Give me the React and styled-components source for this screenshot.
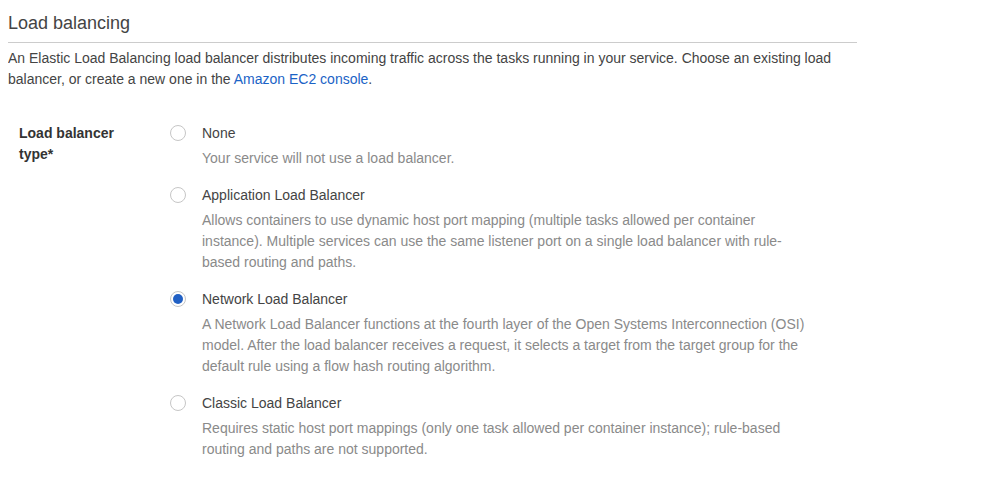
import React from 'react';
import styled, { createGlobalStyle } from 'styled-components';

const GlobalStyle = createGlobalStyle`
  body {
    margin: 8px;
    background: #fff;
    font-family: 'Liberation Sans', Arial, sans-serif;
    color: #444;
  }
`;

const Section = styled.section`
  width: 849px;
`;

const Heading = styled.h2`
  margin: 0;
  padding: 4px 0 8px;
  font-size: 18px;
  font-weight: normal;
  line-height: 22px;
  color: #444;
  border-bottom: 1px solid #ccc;
`;

const Intro = styled.p`
  margin: 5px 0 0;
  font-size: 14px;
  line-height: 21px;
`;

const Link = styled.a`
  color: #1b63c6;
  text-decoration: none;
`;

const FormRow = styled.div`
  display: flex;
  margin-top: 33px;
  padding-left: 11px;
`;

const FieldLabel = styled.div`
  box-sizing: border-box;
  width: 151px;
  padding-right: 30px;
  flex-shrink: 0;
  font-size: 14px;
  line-height: 21px;
  font-weight: bold;
  color: #333;
`;

const Options = styled.div`
  display: flex;
  flex-direction: column;
  gap: 16px;
  width: 640px;
`;

const Option = styled.label`
  display: grid;
  grid-template-columns: 16px 1fr;
  column-gap: 16px;
  row-gap: 4px;
  font-size: 14px;
  line-height: 21px;
  cursor: pointer;
`;

const Radio = styled.span`
  box-sizing: border-box;
  width: 16px;
  height: 16px;
  margin-top: 2px;
  border-radius: 50%;
  border: 1px solid #c6c6c6;
  display: flex;
  align-items: center;
  justify-content: center;

  &::after {
    content: '';
    width: 10px;
    height: 10px;
    border-radius: 50%;
    background: ${(p) => (p.$checked ? '#2160c4' : 'transparent')};
  }
`;

const Title = styled.span`
  color: #444;
`;

const Desc = styled.span`
  grid-column: 2;
  color: #8a8a8a;
`;

const options = [
  {
    title: 'None',
    desc: 'Your service will not use a load balancer.',
  },
  {
    title: 'Application Load Balancer',
    desc:
      'Allows containers to use dynamic host port mapping (multiple tasks allowed per container instance). Multiple services can use the same listener port on a single load balancer with rule-based routing and paths.',
  },
  {
    title: 'Network Load Balancer',
    desc:
      'A Network Load Balancer functions at the fourth layer of the Open Systems Interconnection (OSI) model. After the load balancer receives a request, it selects a target from the target group for the default rule using a flow hash routing algorithm.',
    checked: true,
  },
  {
    title: 'Classic Load Balancer',
    desc:
      'Requires static host port mappings (only one task allowed per container instance); rule-based routing and paths are not supported.',
  },
];

const App = () => {
  return (
    <Section>
      <GlobalStyle />
      <Heading>Load balancing</Heading>
      <Intro>
        An Elastic Load Balancing load balancer distributes incoming traffic across the tasks
        running in your service. Choose an existing load balancer, or create a new one in the{' '}
        <Link href="#">Amazon EC2 console</Link>.
      </Intro>
      <FormRow>
        <FieldLabel>Load balancer type*</FieldLabel>
        <Options>
          {options.map((o) => (
            <Option key={o.title}>
              <Radio $checked={o.checked} />
              <Title>{o.title}</Title>
              <Desc>{o.desc}</Desc>
            </Option>
          ))}
        </Options>
      </FormRow>
    </Section>
  );
};

export default App;
